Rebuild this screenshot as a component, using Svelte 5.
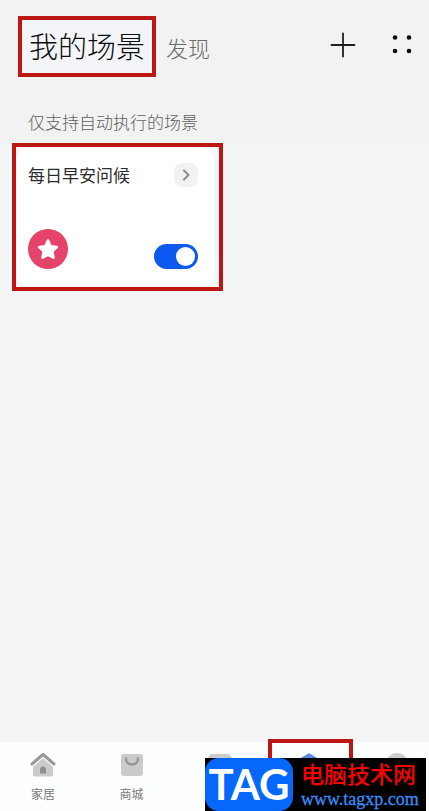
<script lang="ts">
  let enabled = true;

  const scene = { name: "每日早安问候" };
</script>

<div class="app">
  <header>
    <nav class="tabs">
      <a class="tab active" href="#mine">我的场景</a>
      <a class="tab" href="#discover">发现</a>
    </nav>
    <div class="actions">
      <button aria-label="添加">
        <svg width="26" height="26" viewBox="0 0 26 26">
          <path d="M13 1.500v23M1.500 13h23" stroke="#1c1e20" stroke-width="1.8" stroke-linecap="round" />
        </svg>
      </button>
      <button aria-label="更多">
        <svg width="26" height="26" viewBox="0 0 26 26" fill="#0c0c0c">
          <circle cx="6" cy="5.500" r="2.3" />
          <circle cx="20" cy="5.500" r="2.3" />
          <circle cx="6" cy="19" r="2.3" />
          <circle cx="20" cy="19" r="2.3" />
        </svg>
      </button>
    </div>
  </header>

  <main>
    <h2>仅支持自动执行的场景</h2>
    <div class="frame">
      <section class="card">
        <div class="row">
          <label for="scene-toggle">{scene.name}</label>
          <button class="open" aria-label="打开">
            <svg width="24" height="24" viewBox="0 0 24 24" fill="none">
              <path d="M10 7.500 14.500 12 10 16.500" stroke="#8c8c8c" stroke-width="2" stroke-linecap="round" stroke-linejoin="round" />
            </svg>
          </button>
        </div>
        <div class="row bottom">
          <svg width="40" height="40" viewBox="0 0 40 40">
            <circle cx="20" cy="20" r="20" fill="#e6436a" />
            <path d="M20 11.500l2.700 5.700 6.100.8-4.500 4.300 1.200 6.300-5.500-3-5.500 3 1.200-6.300-4.500-4.300 6.100-.8z" fill="#fff" stroke="#fff" stroke-width="2.600" stroke-linejoin="round" />
          </svg>
          <input id="scene-toggle" class="switch" type="checkbox" bind:checked={enabled} />
        </div>
      </section>
    </div>
  </main>

  <footer>
    <a href="#home">
      <svg width="26" height="26" viewBox="0 0 26 26">
        <path d="M13 5 23 14v8.500a2 2 0 0 1-2 2H5a2 2 0 0 1-2-2V14z" fill="#cbcbcb" />
        <path d="M2 13 13 3.500 24 13" fill="none" stroke="#fdfefe" stroke-width="4" />
        <path d="M2 12 13 2.500 24 12" fill="none" stroke="#989898" stroke-width="3" stroke-linecap="round" stroke-linejoin="round" />
        <path d="M10 21.500v-4a3 3 0 0 1 6 0v4z" fill="#8f8f8f" />
      </svg>
      <span>家居</span>
    </a>
    <a href="#mall">
      <svg width="26" height="26" viewBox="0 0 26 26">
        <rect x="2" y="2" width="22" height="22" rx="3" fill="#cbcbcb" />
        <path d="M7 6.500c0 8 12 8 12 0" fill="none" stroke="#969696" stroke-width="2.400" stroke-linecap="round" />
      </svg>
      <span>商城</span>
    </a>
    <a href="#content" aria-label="内容">
      <svg width="26" height="26" viewBox="0 0 26 26">
        <rect x="1" y="2" width="24" height="22" rx="5" fill="#cbcbcb" />
      </svg>
    </a>
    <a class="current" href="#scene" aria-label="场景">
      <svg width="26" height="26" viewBox="0 0 26 26">
        <path d="M13 3.500 23 9.500v9l-10 6-10-6v-9z" fill="#5b86e8" stroke="#5b86e8" stroke-width="4" stroke-linejoin="round" />
      </svg>
    </a>
    <a href="#me" aria-label="我的">
      <svg width="26" height="26" viewBox="0 0 26 26">
        <circle cx="13" cy="12" r="11" fill="#cbcbcb" />
      </svg>
    </a>
  </footer>

  <div class="stamp">
    <strong>TAG</strong>
    <div class="site">
      <span class="name">电脑技术网</span>
      <span class="url">www.tagxp.com</span>
    </div>
  </div>
</div>

<style>
  :global(body) {
    margin: 0;
  }

  .app {
    position: relative;
    display: flex;
    flex-direction: column;
    min-height: 100vh;
    background: linear-gradient(#f2f2f2 136px, #f2f4f6 148px);
    font-family: "Noto Sans CJK SC", sans-serif;
  }

  a {
    color: inherit;
    text-decoration: none;
  }

  button {
    display: flex;
    padding: 0;
    border: 0;
    background: none;
  }

  header {
    display: flex;
    justify-content: space-between;
    padding: 16px 14px 0 18px;
  }

  .tabs {
    display: flex;
    align-items: center;
    gap: 10px;
  }

  .tab {
    color: #686b6e;
    font-size: 22px;
    line-height: 32px;
    font-weight: 300;
  }

  .tab.active {
    box-sizing: border-box;
    height: 61px;
    padding: 0 7px;
    border: 4px solid #bd1714;
    color: #0c0e10;
    font-size: 29px;
    line-height: 51px;
    background: #f3f5f8;
  }

  .actions {
    display: flex;
    gap: 33px;
    padding-top: 16px;
  }

  main {
    flex: 1;
    padding: 33px 12px 0;
  }

  h2 {
    margin: 0 0 9px 16px;
    color: #5e6062;
    font-size: 17px;
    line-height: 24px;
    font-weight: 300;
  }

  .frame {
    box-sizing: border-box;
    width: 211px;
    border: 4px solid #bd1714;
    background: #f5f6f6;
  }

  .card {
    display: flex;
    flex-direction: column;
    gap: 42px;
    padding: 16px 16px 18px 12px;
    margin-right: 5px;
    border-radius: 14px;
    background: #fff;
  }

  .row {
    display: flex;
    align-items: center;
    justify-content: space-between;
  }

  .bottom {
    align-items: flex-end;
  }

  label {
    color: #2a2b2c;
    font-size: 17px;
    line-height: 22px;
  }

  .open {
    border-radius: 8px;
    background: #f2f2f2;
  }

  .switch {
    appearance: none;
    width: 44px;
    height: 25px;
    margin: 0;
    padding: 3px;
    box-sizing: border-box;
    border-radius: 13px;
    background: #c8cacc;
  }

  .switch::before {
    content: "";
    display: block;
    width: 19px;
    height: 19px;
    border-radius: 50%;
    background: #fff;
  }

  .switch:checked {
    background: #0b59ee;
  }

  .switch:checked::before {
    margin-left: auto;
  }

  footer {
    display: flex;
    justify-content: space-between;
    height: 69px;
    padding-left: 11px;
    background: #fdfefe;
  }

  footer a {
    position: relative;
    display: flex;
    flex-direction: column;
    align-items: center;
    gap: 5px;
    width: 64px;
    padding-top: 10px;
    color: #77797b;
    font-size: 12px;
    line-height: 22px;
  }

  .current::before {
    content: "";
    position: absolute;
    top: -3px;
    left: -9px;
    right: -12px;
    bottom: 4px;
    border: 4px solid #bd1714;
  }

  .stamp {
    position: absolute;
    right: 3px;
    bottom: 0;
    display: flex;
    gap: 8px;
    width: 221px;
    height: 53px;
    background: #000;
  }

  .stamp strong {
    flex: none;
    width: 88px;
    border-radius: 14px;
    background: #0568fb;
    color: #fff;
    font: 700 42px/52px Lato, sans-serif;
    text-align: center;
  }

  .site {
    display: flex;
    flex-direction: column;
    white-space: nowrap;
  }

  .name {
    color: #f00;
    font-size: 23px;
    line-height: 30px;
    font-weight: 500;
  }

  .url {
    color: #3b8cf5;
    font: 18px/22px "Liberation Serif", serif;
    -webkit-text-stroke: 0.3px #3b8cf5;
  }
</style>
